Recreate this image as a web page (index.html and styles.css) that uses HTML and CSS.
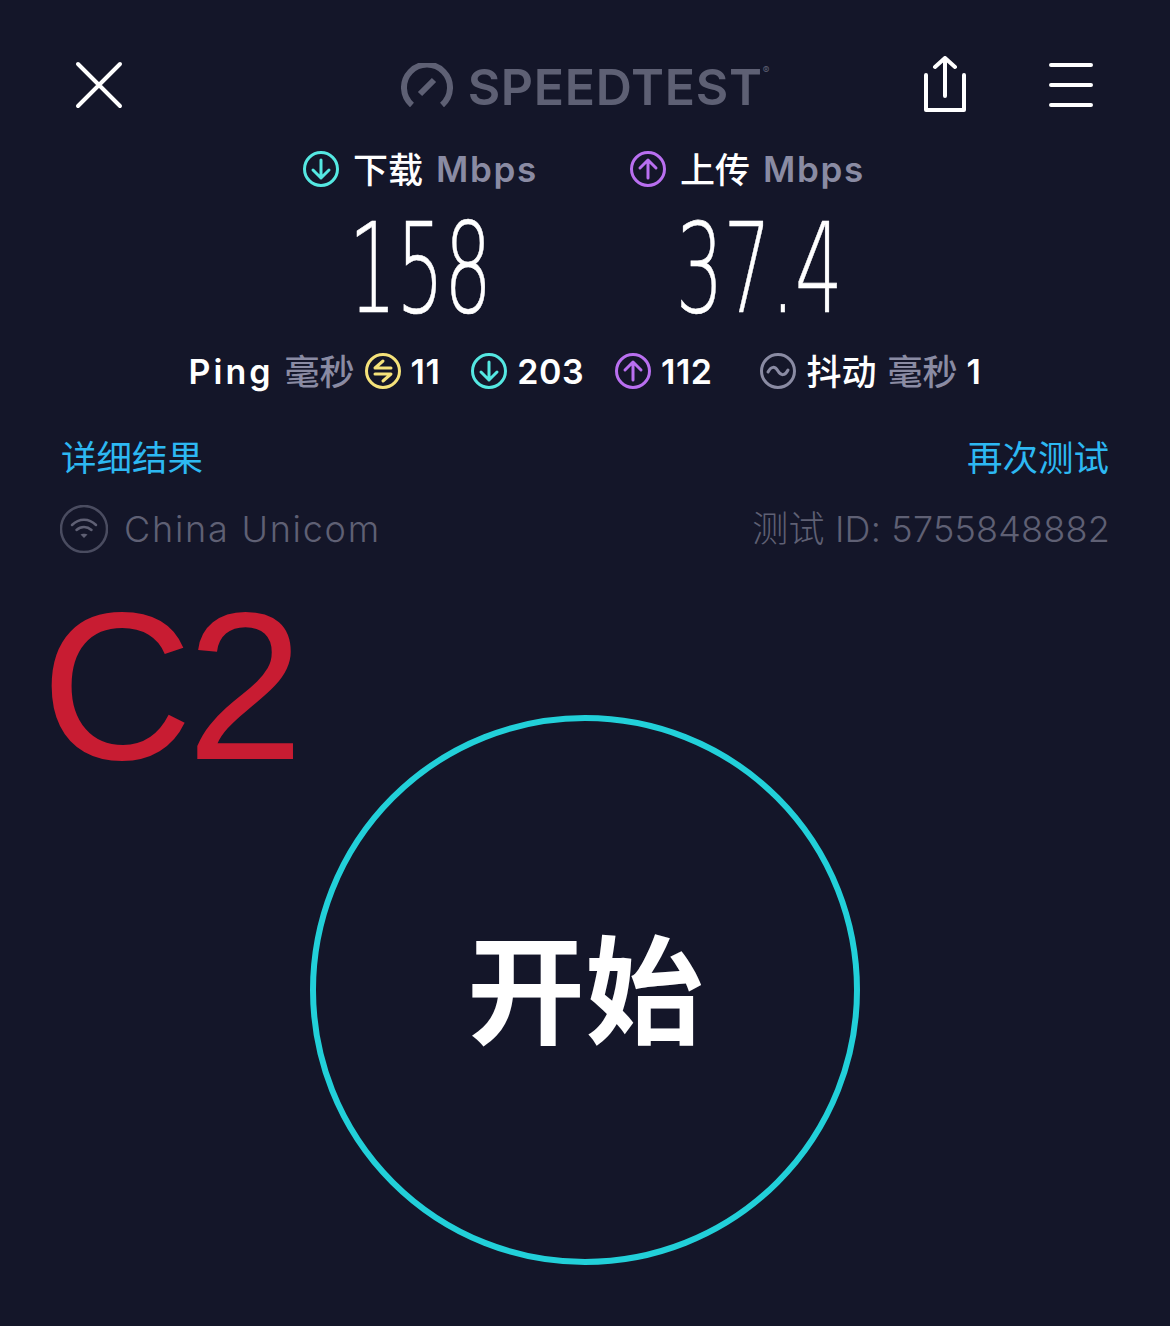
FILE: index.html
```html
<!DOCTYPE html>
<html lang="zh-CN">
<head>
  <meta charset="UTF-8">
  <title>Speedtest</title>
  <link rel="stylesheet" href="styles.css">
</head>
<body>
  <header class="topbar">
    <div class="topbar-left">
      <svg class="icon-close" width="48" height="48" viewBox="0 0 48 48"><path d="M3 3 L45 45 M45 3 L3 45" /></svg>
    </div>
    <div class="logo">
      <svg class="logo-gauge" width="52" height="44" viewBox="0 0 52 44"><path d="M11 42 A23 23 0 1 1 41 42" /><path d="M19 31 L33 17" /></svg>
      <span class="logo-text">SPEEDTEST</span><span class="logo-reg">®</span>
    </div>
    <div class="topbar-right">
      <svg class="icon-share" width="42" height="56" viewBox="0 0 42 56"><path d="M21 40 V2 M11 11 L21 2 L31 11" /><path d="M2 19 V54 H40 V19" /></svg>
      <svg class="icon-menu" width="44" height="46" viewBox="0 0 44 46"><path d="M2 3 H42 M2 23 H42 M2 43 H42" /></svg>
    </div>
  </header>

  <section class="speeds">
    <div class="speed">
      <div class="speed-label">
        <svg class="dial dial-down" width="38" height="38" viewBox="0 0 38 38"><circle cx="19" cy="19" r="16.5" /><path d="M19 10 V28 M11 20 L19 28 L27 20" /></svg>
        <span class="cjk">下载</span> <span class="unit mbps">Mbps</span>
      </div>
      <div class="speed-value"><span>158</span></div>
    </div>
    <div class="speed speed-up">
      <div class="speed-label">
        <svg class="dial dial-up" width="38" height="38" viewBox="0 0 38 38"><circle cx="19" cy="19" r="16.5" /><path d="M19 28 V10 M11 18 L19 10 L27 18" /></svg>
        <span class="cjk">上传</span> <span class="unit mbps">Mbps</span>
      </div>
      <div class="speed-value"><span>37.4</span></div>
    </div>
  </section>

  <section class="stats">
    <div class="stat">
      <span class="ping">Ping</span> <span class="unit cjk">毫秒</span>
      <svg class="dial dial-ping" width="38" height="38" viewBox="0 0 38 38"><circle cx="19" cy="19" r="16.5" /><path d="M27 16 H11 L19 9 M11 22 H27 L19 29" /></svg>
      <span class="num">11</span>
    </div>
    <div class="stat">
      <svg class="dial dial-down" width="38" height="38" viewBox="0 0 38 38"><circle cx="19" cy="19" r="16.5" /><path d="M19 10 V28 M11 20 L19 28 L27 20" /></svg>
      <span class="num">203</span>
    </div>
    <div class="stat">
      <svg class="dial dial-up" width="38" height="38" viewBox="0 0 38 38"><circle cx="19" cy="19" r="16.5" /><path d="M19 28 V10 M11 18 L19 10 L27 18" /></svg>
      <span class="num">112</span>
    </div>
    <div class="stat stat-jitter">
      <svg class="dial dial-jitter" width="38" height="38" viewBox="0 0 38 38"><circle cx="19" cy="19" r="16.5" /><path d="M9 20 C12 14 16 14 19 19 C22 24 26 24 29 18" /></svg>
      <span class="cjk">抖动</span> <span class="unit cjk">毫秒</span> <span class="num">1</span>
    </div>
  </section>

  <section class="links">
    <span>详细结果</span>
    <span>再次测试</span>
  </section>

  <section class="provider">
    <div class="provider-name">
      <svg class="wifi" width="48" height="48" viewBox="0 0 48 48">
        <circle cx="24" cy="24" r="23" />
        <path d="M12 20 C19 13 29 13 36 20 M16.500 25 C21 21 27 21 31.500 25" />
        <path class="wifi-dot" d="M24 33 L20.500 29.500 C22 28.500 26 28.500 27.500 29.500 Z" />
      </svg>
      <span class="carrier">China Unicom</span>
    </div>
    <span class="test-id">测试 ID: 5755848882</span>
  </section>

  <div class="tag">C2</div>

  <div class="start">
    <div class="start-ring">开始</div>
  </div>
</body>
</html>
```

FILE: styles.css
```css
body {
  margin: 0;
  height: 1326px;
  overflow: hidden;
  background-color: #141629;
  color: #fff;
  font-family: Inter, "Noto Sans CJK SC", sans-serif;
}

svg {
  display: block;
  flex: none;
  fill: none;
  stroke-linecap: round;
  stroke-linejoin: round;
}

.topbar {
  display: grid;
  grid-template-columns: 1fr auto 1fr;
  align-items: center;
  height: 70px;
  padding-top: 50px;
}

.topbar-left {
  padding-left: 75px;
}

.topbar-right {
  display: flex;
  align-items: center;
  justify-content: flex-end;
  gap: 83px;
  padding-right: 77px;
}

.icon-close path,
.icon-share path,
.icon-menu path {
  stroke: #fff;
  stroke-width: 4;
}

.icon-share {
  margin-bottom: 2px;
}

.logo {
  display: flex;
  align-items: center;
  color: #5e6074;
}

.logo-gauge {
  margin-right: 15px;
}

.logo-gauge path {
  stroke: #5e6074;
  stroke-width: 6;
  stroke-linecap: butt;
}

.logo-text {
  padding-top: 4px;
  font-size: 50px;
  font-weight: 600;
  letter-spacing: 0.700px;
  line-height: 60px;
}

.logo-reg {
  align-self: flex-start;
  margin-top: 11px;
  font-size: 10px;
  line-height: 12px;
}

.speeds {
  display: flex;
  justify-content: center;
  margin-top: 29px;
  padding-right: 3px;
}

.speed {
  width: 327px;
}

.speed-label {
  display: flex;
  justify-content: center;
  align-items: center;
  gap: 13px;
  height: 40px;
  font-size: 35px;
  white-space: nowrap;
}

.cjk {
  padding-bottom: 4px;
  font-family: "Noto Sans CJK SC", sans-serif;
  font-weight: 500;
}

.unit {
  color: #8a8ba3;
}

.mbps {
  font-weight: 600;
  letter-spacing: 1.700px;
}

.speed-value {
  height: 105px;
  margin-top: 27px;
  text-align: center;
  font-family: "DejaVu Sans", sans-serif;
  font-weight: 200;
  font-size: 125px;
  line-height: 105px;
}

.speed-value span {
  display: inline-block;
  transform: scaleX(0.6);
  -webkit-text-stroke: 0.600px #fff;
}

.speed-up .speed-value {
  padding-left: 24px;
}

.dial circle,
.dial path {
  stroke-width: 3;
}

.dial-down circle,
.dial-down path {
  stroke: #55e8e2;
}

.dial-up circle,
.dial-up path {
  stroke: #b96ff0;
}

.dial-ping circle,
.dial-ping path {
  stroke: #f5e27a;
}

.dial-jitter circle,
.dial-jitter path {
  stroke: #8a8ba3;
}

.stats {
  display: flex;
  justify-content: center;
  gap: 30px;
  margin-top: 30px;
  height: 40px;
}

.stat {
  display: flex;
  align-items: center;
  gap: 9px;
  font-size: 34px;
  white-space: nowrap;
}

.stat .cjk {
  font-size: 35px;
}

.stat .unit {
  margin-left: 2px;
}

.stat-jitter {
  margin-left: 17px;
}

.ping {
  font-weight: 600;
  letter-spacing: 3px;
}

.num {
  font-weight: 600;
  letter-spacing: 0.500px;
}

.links {
  display: flex;
  justify-content: space-between;
  margin-top: 45px;
  padding: 0 61px;
  height: 40px;
  color: #2db8f2;
  font-family: "Noto Sans CJK SC", sans-serif;
  font-size: 35.500px;
  font-weight: 400;
  line-height: 40px;
}

.provider {
  display: flex;
  justify-content: space-between;
  align-items: center;
  margin-top: 29px;
  padding: 0 60px;
  height: 48px;
  color: #5f6074;
  font-size: 36px;
  font-weight: 300;
}

.provider-name {
  display: flex;
  align-items: center;
  gap: 16px;
}

.carrier {
  padding-bottom: 1px;
  letter-spacing: 1.750px;
  line-height: 44px;
}

.test-id {
  letter-spacing: 0.200px;
  line-height: 44px;
}

.wifi circle {
  stroke: #4a4c60;
  stroke-width: 2.500;
}

.wifi path {
  stroke: #5f6074;
  stroke-width: 2.500;
}

.wifi .wifi-dot {
  fill: #5f6074;
  stroke: none;
}

.tag {
  height: 143px;
  margin-top: 19px;
  padding-left: 41px;
  color: #c81c32;
  font-family: "Liberation Sans", sans-serif;
  font-size: 210px;
  letter-spacing: -6px;
  line-height: 230px;
}

.start {
  display: flex;
  justify-content: center;
}

.start-ring {
  display: flex;
  justify-content: center;
  align-items: center;
  box-sizing: border-box;
  width: 550px;
  height: 550px;
  padding-bottom: 14px;
  border: 6px solid #22d0d9;
  border-radius: 50%;
  font-family: "Noto Sans CJK SC", sans-serif;
  font-size: 118px;
  font-weight: 700;
}
```
